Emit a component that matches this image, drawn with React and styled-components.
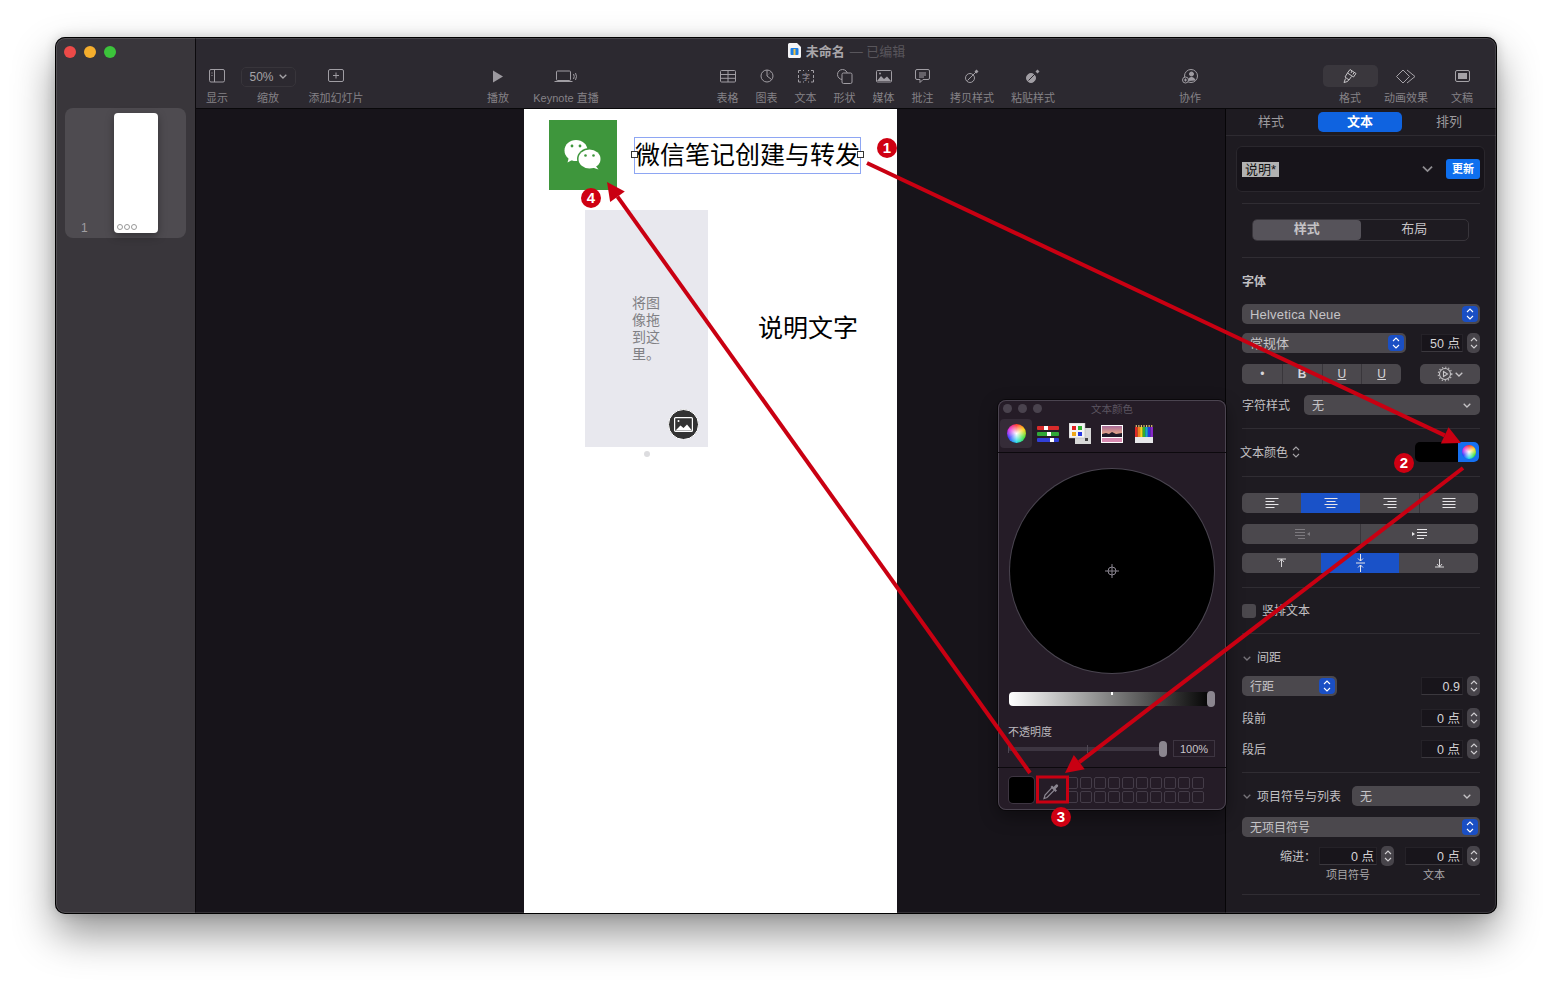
import React from "react";
import styled, { createGlobalStyle } from "styled-components";

const FONT = `"Liberation Sans", "Noto Sans CJK SC", sans-serif`;
const ICON = "#a09da3";
const RED = "#c90012";

const GlobalStyle = createGlobalStyle`
  html, body {
    margin: 0;
    background: #fff;
  }
  * {
    box-sizing: border-box;
  }
`;

const Page = styled.div`
  position: relative;
  width: 1552px;
  height: 987px;
  padding: 37px 0 0 55px;
  overflow: hidden;
  font-family: ${FONT};
  background: #fff;
`;

const Window = styled.div`
  position: relative;
  display: flex;
  width: 1442px;
  height: 877px;
  border-radius: 10px;
  overflow: hidden;
  background: #2c2930;
`;

const WindowFrame = styled.div`
  position: absolute;
  inset: 0;
  border-radius: 10px;
  box-shadow: inset 0 0 0 1px #000, inset 0 0 0 2px rgba(255, 255, 255, 0.12);
  pointer-events: none;
`;

const WindowShadow = styled.div`
  position: absolute;
  left: 55px;
  top: 37px;
  width: 1442px;
  height: 877px;
  border-radius: 10px;
  box-shadow: 0 20px 42px rgba(0, 0, 0, 0.42), 0 0 12px rgba(0, 0, 0, 0.16);
`;

/* left thumbnails */
const Sidebar = styled.aside`
  flex: none;
  width: 141px;
  padding: 9px 9px 0 10px;
  background: #39363b;
  border-right: 1px solid #0c0a0d;
`;

const Lights = styled.div`
  display: flex;
  gap: 8px;
  margin-left: -1px;
`;

const Light = styled.span`
  width: 12px;
  height: 12px;
  border-radius: 50%;
  background: ${(p) => p.$color};
`;

const ThumbCard = styled.div`
  display: flex;
  justify-content: flex-start;
  width: 121px;
  height: 130px;
  margin-top: 50px;
  padding: 5px 0 0 49px;
  border-radius: 8px;
  background: #4e4b50;
`;

const ThumbNumber = styled.span`
  align-self: flex-end;
  margin: 0 0 3px -33px;
  width: 33px;
  color: #a09ea2;
  font-size: 12px;
`;

const ThumbSlide = styled.div`
  display: flex;
  align-items: flex-end;
  gap: 1px;
  width: 44px;
  height: 120px;
  padding: 0 0 3px 3px;
  border-radius: 4px;
  background: #fff;
  box-shadow: 0 3px 8px rgba(0, 0, 0, 0.35);
`;

const ThumbDot = styled.span`
  width: 6px;
  height: 6px;
  border: 1px solid #999;
  border-radius: 50%;
`;

/* main column */
const Main = styled.div`
  flex: 1;
  min-width: 0;
  display: flex;
  flex-direction: column;
`;

const Toolbar = styled.header`
  flex: none;
  height: 72px;
  background: #2c2930;
  border-bottom: 1px solid #09080a;
`;

const TitleRow = styled.div`
  display: flex;
  align-items: center;
  justify-content: center;
  gap: 5px;
  height: 28px;
  padding-bottom: 2px;
  font-size: 13px;
`;

const TitleName = styled.span`
  color: #a9a6aa;
  font-weight: 700;
`;

const TitleState = styled.span`
  color: #59565c;
`;

const ToolRow = styled.div`
  display: flex;
`;

const ToolItem = styled.div`
  flex: none;
  display: flex;
  flex-direction: column;
  align-items: center;
  width: ${(p) => p.$w}px;
  margin-left: ${(p) => p.$ml || 0}px;
`;

const ToolIcon = styled.div`
  display: flex;
  align-items: center;
  justify-content: center;
  width: ${(p) => (p.$active ? "55px" : "100%")};
  height: 22px;
  border-radius: 5px;
  background: ${(p) => (p.$active ? "#3a373d" : "transparent")};
`;

const ZoomBox = styled.div`
  display: flex;
  align-items: center;
  justify-content: center;
  gap: 5px;
  width: 55px;
  height: 20px;
  margin-top: 1px;
  border: 1px solid #38353b;
  border-radius: 5px;
  color: #a5a3a7;
  font-size: 12px;
`;

const ToolLabel = styled.span`
  margin-top: 3px;
  padding-top: 1px;
  color: #858287;
  font-size: 11px;
  line-height: 15px;
  white-space: nowrap;
`;

const Workspace = styled.div`
  flex: 1;
  min-height: 0;
  display: flex;
`;

const Canvas = styled.main`
  flex: 1;
  display: flex;
  justify-content: center;
  background: #17141a;
  border-right: 1px solid #060507;
`;

const Slide = styled.section`
  position: relative;
  width: 373px;
  background: #fff;
`;

const WechatTile = styled.div`
  position: absolute;
  left: 25px;
  top: 11px;
  display: flex;
  align-items: center;
  justify-content: center;
  width: 68px;
  height: 70px;
  background: #3e963c;
`;

const TitleBox = styled.div`
  position: absolute;
  left: 110px;
  top: 28px;
  width: 227px;
  height: 37px;
  border: 1px solid #8ea6f3;
  color: #000;
  font-size: 25px;
  line-height: 35px;
  text-align: center;
  white-space: nowrap;
`;

const Handle = styled.span`
  position: absolute;
  top: 13px;
  ${(p) => p.$side}: -4px;
  width: 7px;
  height: 7px;
  border: 1px solid #333;
  background: #fff;
`;

const Placeholder = styled.div`
  position: absolute;
  left: 61px;
  top: 101px;
  display: flex;
  align-items: center;
  justify-content: center;
  width: 123px;
  height: 237px;
  background: #e8e8ee;
`;

const PlaceholderText = styled.p`
  width: 30px;
  margin: 0 1px 0 0;
  color: #808084;
  font-size: 14px;
  line-height: 17px;
  text-align: center;
`;

const MediaBadge = styled.div`
  position: absolute;
  right: 9px;
  bottom: 7px;
  display: flex;
  align-items: center;
  justify-content: center;
  width: 31px;
  height: 31px;
  border: 1px solid #fff;
  border-radius: 50%;
  background: #333;
`;

const SlideDot = styled.span`
  position: absolute;
  left: 120px;
  top: 342px;
  width: 6px;
  height: 6px;
  border-radius: 50%;
  background: #dcdcdf;
`;

const Caption = styled.div`
  position: absolute;
  left: 234px;
  top: 202px;
  color: #000;
  font-size: 25px;
  line-height: 34px;
  white-space: nowrap;
`;

/* right inspector */
const Inspector = styled.aside`
  flex: none;
  width: 271px;
  display: flex;
  flex-direction: column;
  background: #1e1b21;
  color: #b5b3b6;
  font-size: 12px;
`;

const Tabs = styled.div`
  flex: none;
  display: flex;
  justify-content: center;
  gap: 5px;
  height: 27px;
  padding: 3px 3px 0 0;
  border-bottom: 1px solid #2e2b31;
`;

const Tab = styled.div`
  width: 84px;
  height: 20px;
  border-radius: 5px;
  background: ${(p) => (p.$active ? "#0f63e0" : "transparent")};
  color: ${(p) => (p.$active ? "#fff" : "#9c9a9e")};
  font-size: 13px;
  font-weight: ${(p) => (p.$active ? 700 : 400)};
  line-height: 20px;
  text-align: center;
`;

const Pane = styled.div`
  padding: 0 17px 0 16px;
`;

const StyleCard = styled.div`
  display: flex;
  align-items: center;
  width: 249px;
  height: 46px;
  margin: 10px 0 0 -6px;
  padding: 0 4px 0 5px;
  border: 1px solid #2a272d;
  border-radius: 6px;
  background: #17141a;
`;

const StyleName = styled.span`
  padding: 0 3px;
  background: #b2b2b2;
  color: #111;
  font-size: 13px;
  line-height: 15px;
`;

const StyleGap = styled.span`
  flex: 1;
`;

const UpdateButton = styled.span`
  width: 34px;
  height: 20px;
  margin-left: 13px;
  border-radius: 3px;
  background: #0e6fee;
  color: #fff;
  font-size: 11px;
  font-weight: 700;
  line-height: 20px;
  text-align: center;
`;

const Divider = styled.hr`
  height: 1px;
  margin: ${(p) => p.$mt}px 0 0;
  border: 0;
  background: #302d33;
`;

const Segment = styled.div`
  display: flex;
  width: 217px;
  height: 22px;
  margin: 15px 0 0 10px;
  border: 1px solid #38353b;
  border-radius: 5px;
`;

const SegmentItem = styled.div`
  flex: 1;
  border-radius: 4px;
  background: ${(p) => (p.$active ? "#56535a" : "transparent")};
  color: #c4c2c5;
  font-size: 13px;
  font-weight: ${(p) => (p.$active ? 700 : 400)};
  line-height: 18px;
  text-align: center;
`;

const Row = styled.div`
  display: flex;
  align-items: center;
  justify-content: ${(p) => p.$justify || "flex-start"};
  height: ${(p) => p.$h || 20}px;
  margin-top: ${(p) => p.$mt}px;
`;

const Heading = styled.span`
  margin-left: ${(p) => p.$ml || 0}px;
  padding-bottom: ${(p) => p.$pb ?? 2}px;
  color: #c2c0c3;
  font-weight: ${(p) => (p.$bold ? 700 : 400)};
  white-space: nowrap;
`;

const Select = styled.div`
  flex: none;
  display: flex;
  align-items: center;
  justify-content: space-between;
  width: ${(p) => p.$w}px;
  height: 20px;
  margin-left: ${(p) => p.$ml || 0}px;
  padding: 0 2px 0 8px;
  border-radius: 5px;
  background: #4b484d;
  color: #c6c4c7;
  font-size: ${(p) => p.$fs || 12}px;
  white-space: nowrap;
`;

const SelectText = styled.span`
  padding: ${(p) => (p.$latin ? "1px 0 0" : "0 0 2px")};
  letter-spacing: ${(p) => (p.$latin ? "0.2px" : "0")};
`;

const BlueUpDown = styled.span`
  display: flex;
  align-items: center;
  justify-content: center;
  width: 16px;
  height: 16px;
  border-radius: 4px;
  background: #1a4fc4;
`;

const DownWrap = styled.span`
  display: flex;
  padding-right: 7px;
`;

const NumField = styled.div`
  flex: none;
  width: ${(p) => p.$w || 42}px;
  height: 18px;
  margin-left: ${(p) => p.$ml || 0}px;
  padding-right: 2px;
  border: 1px solid #252228;
  border-bottom-color: #3b383e;
  background: #18151b;
  color: #d5d3d6;
  font-size: 12.5px;
  line-height: 18px;
  text-align: right;
  white-space: nowrap;
`;

const StepperBox = styled.div`
  flex: none;
  display: flex;
  align-items: center;
  justify-content: center;
  width: 13px;
  height: 20px;
  margin-left: 4px;
  border-radius: 5px;
  background: #47444a;
`;

const Group = styled.div`
  flex: none;
  display: flex;
  width: ${(p) => p.$w || 236}px;
  height: 20px;
  border-radius: 5px;
  overflow: hidden;
  background: #4b484d;
`;

const GroupCell = styled.div`
  flex: ${(p) => p.$flex || 1};
  display: flex;
  align-items: center;
  justify-content: center;
  color: #d8d6d9;
  font-size: 12px;
  font-weight: ${(p) => (p.$bold ? 700 : 400)};
  text-decoration: ${(p) => (p.$underline ? "underline" : "none")};
  background: ${(p) => (p.$active ? "#1a52c8" : "transparent")};
  border-left: 1px solid ${(p) => (p.$line ? "#39363b" : "transparent")};
`;

const GearButton = styled.div`
  flex: none;
  display: flex;
  align-items: center;
  justify-content: center;
  gap: 2px;
  width: 60px;
  height: 20px;
  margin-left: 19px;
  border-radius: 5px;
  background: #4b484d;
`;

const ColorLabel = styled.span`
  display: flex;
  align-items: center;
  gap: 4px;
  margin-left: -2px;
  padding-bottom: 1px;
  color: #c2c0c3;
`;

const ColorWell = styled.div`
  flex: none;
  display: flex;
  align-items: center;
  width: 64px;
  height: 20px;
  margin-left: auto;
  margin-right: 1px;
  border-radius: 5px;
  overflow: hidden;
  background: #000;
`;

const ColorButton = styled.span`
  display: flex;
  align-items: center;
  justify-content: center;
  width: 21px;
  height: 20px;
  margin-left: auto;
  background: #1670f0;
`;

const Wheel = styled.span`
  display: block;
  width: ${(p) => p.$size}px;
  height: ${(p) => p.$size}px;
  border-radius: 50%;
  background: radial-gradient(circle, #fff 0%, rgba(255, 255, 255, 0) 72%),
    conic-gradient(#ff2a20, #ffd000, #32e02c, #18d8e8, #2830ff, #e020e0, #ff2a20);
`;

const CheckBox = styled.span`
  width: 14px;
  height: 14px;
  border-radius: 3px;
  background: #4b484d;
`;

const CollapseRow = styled(Row)`
  gap: 6px;
  padding-left: 1px;
`;

const IndentLabel = styled.span`
  width: 74px;
  margin-right: 3px;
  padding-bottom: 2px;
  color: #c2c0c3;
  text-align: right;
  white-space: nowrap;
`;

const SubLabels = styled.div`
  display: flex;
  height: 14px;
  margin-top: 2px;
  color: #a9a7aa;
  font-size: 11px;
  line-height: 14px;
`;

const SubLabel = styled.span`
  width: ${(p) => p.$w}px;
  margin-left: ${(p) => p.$ml}px;
  text-align: center;
`;

/* floating colour picker */
const ColorPanel = styled.div`
  position: absolute;
  left: 943px;
  top: 363px;
  width: 228px;
  height: 410px;
  display: flex;
  flex-direction: column;
  border-radius: 8px;
  background: #251c27;
  box-shadow: inset 0 0 0 1px #4b4450, 0 0 0 1px #0a080b, 0 6px 18px rgba(0, 0, 0, 0.4);
  overflow: hidden;
`;

const PanelTitle = styled.div`
  position: relative;
  flex: none;
  height: 19px;
  color: #5c5560;
  font-size: 10.5px;
  line-height: 18px;
  text-align: center;
`;

const PanelDots = styled.div`
  position: absolute;
  left: 5px;
  top: 4px;
  display: flex;
  gap: 6px;
`;

const PanelDot = styled.span`
  width: 9px;
  height: 9px;
  border-radius: 50%;
  background: #4a434e;
`;

const PickerTabs = styled.div`
  flex: none;
  display: flex;
  align-items: center;
  height: 34px;
  padding: 0 0 4px 2px;
  border-bottom: 1px solid #0c090d;
`;

const PickerTab = styled.div`
  flex: none;
  display: flex;
  align-items: center;
  justify-content: center;
  width: 32px;
  height: 29px;
  border-radius: 4px;
  background: ${(p) => (p.$active ? "#352c38" : "transparent")};
`;

const BigWheel = styled.div`
  flex: none;
  display: flex;
  align-items: center;
  justify-content: center;
  align-self: center;
  width: 204px;
  height: 204px;
  margin-top: 16px;
  border-radius: 50%;
  background: #000;
  box-shadow: 0 0 0 1px #4a4550;
`;

const Brightness = styled.div`
  position: relative;
  flex: none;
  width: 204px;
  height: 14px;
  margin: 19px 0 0 11px;
  border-radius: 4px;
  background: linear-gradient(90deg, #fff, #808080 50%, #000);
`;

const BrightTick = styled.span`
  position: absolute;
  left: 102px;
  top: 0;
  width: 2px;
  height: 3px;
  background: #fff;
`;

const SliderKnob = styled.span`
  position: absolute;
  right: ${(p) => p.$right}px;
  top: ${(p) => p.$top}px;
  width: 8px;
  height: 16px;
  border-radius: 4px;
  background: #8b868f;
`;

const OpacityLabel = styled.div`
  flex: none;
  margin: 19px 0 0 10px;
  color: #bab7bc;
  font-size: 11px;
  line-height: 15px;
`;

const OpacityRow = styled.div`
  flex: none;
  display: flex;
  align-items: center;
  height: 17px;
  margin-left: 10px;
`;

const OpacityTrack = styled.div`
  position: relative;
  width: 158px;
  height: 4px;
  border-radius: 2px;
  background: #3d3541;
`;

const OpacityTick = styled.span`
  position: absolute;
  left: ${(p) => p.$left}px;
  top: -2px;
  width: 1px;
  height: 8px;
  background: #4e4652;
`;

const OpacityValue = styled.div`
  width: 42px;
  height: 17px;
  margin-left: 7px;
  border: 1px solid #3d3541;
  color: #c8c5ca;
  font-size: 11px;
  line-height: 16px;
  text-align: center;
`;

const SwatchRow = styled.div`
  flex: 1;
  display: flex;
  margin-top: 10px;
  padding: 9px 0 0 11px;
  border-top: 1px solid #0c090d;
`;

const BlackSwatch = styled.span`
  width: 25px;
  height: 26px;
  border-radius: 4px;
  background: #000;
  box-shadow: 0 0 0 1px #3d3541;
`;

const Dropper = styled.span`
  display: flex;
  align-items: center;
  justify-content: center;
  width: 30px;
  height: 27px;
  margin-left: 2px;
`;

const SwatchGrid = styled.div`
  display: grid;
  grid-template-columns: repeat(10, 12px);
  grid-auto-rows: 12px;
  gap: 2px;
`;

const SwatchCell = styled.span`
  border: 1px solid #443c48;
  border-radius: 2px;
`;

/* annotations drawn over the screenshot */
const Overlay = styled.svg`
  position: absolute;
  left: 0;
  top: 0;
  width: 1552px;
  height: 987px;
  pointer-events: none;
`;

const Badge = styled.span`
  position: absolute;
  left: ${(p) => p.$x - 10}px;
  top: ${(p) => p.$y - 10}px;
  width: 20px;
  height: 20px;
  border-radius: 50%;
  background: #cf0012;
  color: #fff;
  font-size: 15px;
  font-weight: 700;
  line-height: 20px;
  text-align: center;
`;

const Svg = ({ w = 20, h = 16, children, color = ICON, sw = 1 }) => (
  <svg width={w} height={h} viewBox={`0 0 ${w} ${h}`} fill="none" stroke={color} strokeWidth={sw}>
    {children}
  </svg>
);

const IconShow = () => (
  <Svg w={16} h={14}>
    <rect x=".5" y=".5" width="15" height="12.5" rx="1.5" />
    <path d="M5.5.5v12.5M2.5 4h1M2.5 6.500h1" />
  </Svg>
);
const IconAdd = () => (
  <Svg w={16} h={14}>
    <rect x=".5" y=".5" width="15" height="12" rx="1.5" />
    <path d="M8 3.500v6M5 6.500h6" />
  </Svg>
);
const IconPlay = () => (
  <svg width="12" height="13" viewBox="0 0 12 13">
    <path d="M1 .5l10 6-10 6z" fill="#9c999f" />
  </svg>
);
const IconLive = () => (
  <Svg w={24} h={13}>
    <rect x="2.5" y="1" width="14" height="9.5" rx="1" />
    <path d="M.5 11.500h18M19.500 4q1.500 2.500 0 5M21.500 3q2 3.500 0 7" />
  </Svg>
);
const IconTable = () => (
  <Svg w={16} h={13}>
    <rect x=".5" y=".5" width="15" height="11.500" rx="1" />
    <path d="M.5 4.500h15M.5 8.300h15M8 .5v11.500" />
  </Svg>
);
const IconChart = () => (
  <Svg w={14} h={14}>
    <circle cx="7" cy="7" r="6" />
    <path d="M7 7V1M7 7l4.500 3.500" />
    <path d="M7 7l4-4.500" opacity=".3" />
  </Svg>
);
const IconText = () => (
  <Svg w={16} h={13}>
    <path d="M3 .5H.5V3M13 .5h2.500V3M3 12H.5V9.500M13 12h2.500V9.500M5 .5h1M10 .5h1M5 12h1M10 12h1M.5 5v3M15.500 5v3" />
    <text x="8" y="9.500" fontSize="8" fill={ICON} stroke="none" textAnchor="middle" fontFamily={FONT}>
      字
    </text>
  </Svg>
);
const IconShape = () => (
  <Svg w={16} h={15}>
    <circle cx="5.500" cy="5.500" r="5" />
    <rect x="5" y="4" width="10" height="10.500" rx="1.500" fill="#2c2930" />
  </Svg>
);
const IconMedia = () => (
  <Svg w={16} h={13}>
    <rect x=".5" y=".5" width="15" height="11.500" rx="1" />
    <path d="M1 11l4-5 3 3 3-2.500 4 4.500z" fill={ICON} stroke="none" />
    <circle cx="4" cy="3.500" r="1" fill={ICON} stroke="none" />
  </Svg>
);
const IconComment = () => (
  <Svg w={15} h={15}>
    <path d="M2 .5h11a1.500 1.500 0 0 1 1.500 1.500v7a1.500 1.500 0 0 1-1.500 1.500H8l-3 3v-3H2A1.500 1.500 0 0 1 .5 9V2A1.500 1.500 0 0 1 2 .5z" />
    <path d="M4 4h7M4 6h7M4 8h5" />
  </Svg>
);
const IconCopyStyle = ({ filled }) => (
  <Svg w={14} h={14}>
    <circle cx="5" cy="9" r="4.500" fill={filled ? ICON : "none"} />
    <path d="M2.500 11.500L11 3" stroke={filled ? "#2c2930" : ICON} />
    <path d="M9.500 2.500l2-2 2 2-2 2z" fill={ICON} stroke="none" />
  </Svg>
);
const IconCollab = () => (
  <Svg w={16} h={15}>
    <circle cx="9" cy="7" r="6.500" />
    <circle cx="9.500" cy="5" r="2" fill={ICON} />
    <path d="M5.500 12q1-4 4-4t4 3.500z" fill={ICON} stroke="none" />
    <circle cx="3.500" cy="11" r="3" fill="#2c2930" />
    <path d="M3.500 9.500v3M2 11h3" />
  </Svg>
);
const IconFormat = () => (
  <Svg w={15} h={16} color="#c7c5c8">
    <path d="M7 1.500l6 4-2.500 3.500-6-4z" />
    <path d="M4.500 5L2 9l4 3 2.500-3.500M2.500 10.500L1 14.500l3.500-1 1.500-2" />
    <path d="M9 3l-1 2M11 4.500l-1 2" />
  </Svg>
);
const IconAnimate = () => (
  <Svg w={20} h={15} color="#a5a2a7">
    <path d="M7 1l6.500 6.500L7 14 .5 7.500zM11 1l8 6.500-8 6.500" />
  </Svg>
);
const IconDoc = () => (
  <Svg w={15} h={12} color="#a5a2a7">
    <rect x=".5" y=".5" width="14" height="11" rx="1.500" />
    <rect x="3" y="3" width="9" height="6" fill="#a5a2a7" stroke="none" />
  </Svg>
);

const FileIcon = () => (
  <svg width="13" height="15" viewBox="0 0 13 15">
    <path d="M1.500 0H9l4 4v9.500a1.500 1.500 0 0 1-1.500 1.500h-10A1.500 1.500 0 0 1 0 13.500v-12A1.500 1.500 0 0 1 1.500 0z" fill="#f4f4f6" />
    <rect x="2.500" y="5" width="8" height="7" rx="1" fill="#1c7fe6" />
    <rect x="5.500" y="6" width="2" height="6" fill="#f3c244" />
  </svg>
);

const ChevronDown = ({ color = "#c4c2c5", size = 8 }) => (
  <svg width={size} height={size - 3} viewBox="0 0 8 5" fill="none" stroke={color} strokeWidth="1.300">
    <path d="M.7.700L4 4l3.300-3.300" />
  </svg>
);

const UpDown = ({ color = "#fff" }) => (
  <svg width="8" height="14" viewBox="0 0 8 14" fill="none" stroke={color} strokeWidth="1.100">
    <path d="M1 5l3-3 3 3M1 9l3 3 3-3" />
  </svg>
);

const Stepper = () => (
  <StepperBox>
    <UpDown color="#d0ced1" />
  </StepperBox>
);

const WechatLogo = () => (
  <svg width="38" height="32" viewBox="0 0 38 32">
    <ellipse cx="12" cy="11.500" rx="11.500" ry="10.500" fill="#fff" />
    <path d="M5 18l-1.500 5.500L10 20z" fill="#fff" />
    <ellipse cx="25.500" cy="20" rx="12.500" ry="11" fill="#3e963c" />
    <ellipse cx="25.500" cy="20" rx="11" ry="9.500" fill="#fff" />
    <path d="M31 26l3.500 4.500-6-2z" fill="#fff" />
    <circle cx="8" cy="7" r="1.400" fill="#3e963c" />
    <circle cx="16" cy="7" r="1.400" fill="#3e963c" />
    <circle cx="21.500" cy="16.500" r="1.300" fill="#3e963c" />
    <circle cx="29.500" cy="16.500" r="1.300" fill="#3e963c" />
  </svg>
);

const MediaIcon = () => (
  <svg width="19" height="15" viewBox="0 0 19 15" fill="none" stroke="#fff" strokeWidth="1.200">
    <rect x=".6" y=".6" width="17.800" height="13.800" rx="1" />
    <path d="M1.500 13.500l5-5 3 2.500 3.500-3.500 5 6z" fill="#fff" stroke="none" />
    <circle cx="4.500" cy="4" r="1" fill="#fff" stroke="none" />
  </svg>
);

const AlignLines = ({ side, color = "#e8e6e9" }) => {
  const widths = [13, 9, 13, 9];
  return (
    <svg width="14" height="12" viewBox="0 0 14 12" stroke={color} strokeWidth="1">
      {widths.map((w, i) => {
        const width = side === "justify" ? 13 : w;
        const x = side === "left" ? 0.5 : side === "right" ? 13.5 - width : (14 - width) / 2;
        return <line key={i} x1={x} x2={x + width} y1={1.5 + i * 3} y2={1.5 + i * 3} />;
      })}
    </svg>
  );
};

const IndentIcon = ({ flip, color }) => (
  <svg width="16" height="12" viewBox="0 0 16 12" stroke={color} strokeWidth="1" style={flip ? { transform: "scaleX(-1)" } : undefined}>
    <path d="M5 1.500h10M5 4.500h10M5 7.500h10M5 10.500h7" />
    <path d="M0 4l3 2-3 2z" fill={color} stroke="none" />
  </svg>
);

const ValignIcon = ({ kind, color }) => (
  <svg width="11" height="20" viewBox="0 0 11 20" fill="none" stroke={color} strokeWidth="1">
    {kind === "top" && <path d="M1 6h9M5.500 6v8M3 9l2.500-3L8 9" />}
    {kind === "mid" && <path d="M1 10h9M5.500 1v7M5.500 12v7M3 5.500l2.500 2.500L8 5.500M3 14.500L5.500 12 8 14.500" />}
    {kind === "bottom" && <path d="M1 14h9M5.500 6v8M3 11l2.500 3L8 11" />}
  </svg>
);

const GearIcon = () => (
  <svg width="16" height="16" viewBox="0 0 16 16" fill="none" stroke="#c8c6c9" strokeWidth="1.100">
    <circle cx="8" cy="8" r="5.500" />
    <circle cx="8" cy="8" r="6.800" strokeDasharray="1.200 2" />
    <path d="M6.500 5.500L10.500 8l-4 2.500z" />
  </svg>
);

const SlidersIcon = () => (
  <svg width="22" height="16" viewBox="0 0 22 16">
    <rect x="0" y="0" width="22" height="4" rx="1" fill="#d92b2b" />
    <rect x="0" y="6" width="22" height="4" rx="1" fill="#30a838" />
    <rect x="0" y="12" width="22" height="4" rx="1" fill="#3240d8" />
    <rect x="7" y="0" width="4" height="4" fill="#fff" />
    <rect x="10" y="6" width="4" height="4" fill="#fff" />
    <rect x="13" y="12" width="4" height="4" fill="#fff" />
  </svg>
);

const PaletteIcon = () => (
  <svg width="22" height="21" viewBox="0 0 22 21">
    <rect x="6" y="5" width="16" height="16" fill="#d8d8d8" />
    <rect x="16" y="15" width="3" height="3" fill="#444" />
    <rect x="0" y="0" width="16" height="15" fill="#f4f4f4" stroke="#aaa" strokeWidth=".5" />
    <rect x="3" y="3" width="4" height="4" fill="#e02020" />
    <rect x="9" y="3" width="4" height="4" fill="#30b030" />
    <rect x="3" y="9" width="4" height="4" fill="#f0a818" />
    <rect x="9" y="9" width="4" height="4" fill="#2838e0" />
  </svg>
);

const LandscapeIcon = () => (
  <svg width="22" height="18" viewBox="0 0 22 18">
    <defs>
      <linearGradient id="sky" x1="0" y1="0" x2="0" y2="1">
        <stop offset="0" stopColor="#a86a98" />
        <stop offset="1" stopColor="#f0b088" />
      </linearGradient>
    </defs>
    <rect width="22" height="18" fill="#fff" />
    <rect x="1" y="1" width="20" height="9" fill="url(#sky)" />
    <path d="M1 9l4-1 3 1 3-2 4 2 6-1v4H1z" fill="#201a28" />
    <rect x="1" y="13" width="20" height="4" fill="#d88ab0" />
  </svg>
);

const PencilsIcon = () => {
  const colors = ["#e02828", "#f08020", "#f0d820", "#30b030", "#18a8c8", "#2838e0", "#8828c8"];
  return (
    <svg width="18" height="18" viewBox="0 0 18 18">
      {colors.map((c, i) => (
        <g key={c}>
          <rect x={i * 2.57} y="2" width="2.570" height="10" fill={c} />
          <rect x={i * 2.57 + 0.7} y="0" width="1.200" height="2" fill="#e0c070" />
        </g>
      ))}
      <rect y="12" width="18" height="6" fill="#e8e8ea" />
    </svg>
  );
};

const Crosshair = () => (
  <svg width="14" height="14" viewBox="0 0 14 14" fill="none" stroke="#8a8590" strokeWidth="1">
    <circle cx="7" cy="7" r="4" />
    <path d="M7 0v14M0 7h14" />
  </svg>
);

const DropperIcon = () => (
  <svg width="18" height="18" viewBox="0 0 18 18">
    <path d="M10.500 5L13 7.500 5 15.500 2 16.500 3 13z" fill="none" stroke="#8a8590" strokeWidth="1.200" />
    <path d="M10 3.500l1.500 1.500 2.500-2.500a1.500 1.500 0 0 1 2 2L13.500 7l1.500 1.500L13.500 10 8.500 5z" fill="#8a8590" />
  </svg>
);

const Arrow = ({ from, to }) => {
  const [x1, y1] = from;
  const [x2, y2] = to;
  const len = Math.hypot(x2 - x1, y2 - y1);
  const ux = (x2 - x1) / len;
  const uy = (y2 - y1) / len;
  const bx = x2 - ux * 18;
  const by = y2 - uy * 18;
  const head = `${x2},${y2} ${bx - uy * 9},${by + ux * 9} ${bx + uy * 9},${by - ux * 9}`;
  return (
    <g>
      <line x1={x1} y1={y1} x2={bx} y2={by} stroke={RED} strokeWidth="4" />
      <polygon points={head} fill={RED} />
    </g>
  );
};

const TOOLS = [
  { label: "显示", w: 30, ml: 6, icon: <IconShow /> },
  { label: "缩放", w: 56, ml: 8, zoom: true },
  { label: "添加幻灯片", w: 64, ml: 8, icon: <IconAdd /> },
  { label: "播放", w: 40, ml: 110, icon: <IconPlay /> },
  { label: "Keynote 直播", w: 76, ml: 10, icon: <IconLive /> },
  { label: "表格", w: 39, ml: 104, icon: <IconTable /> },
  { label: "图表", w: 39, icon: <IconChart /> },
  { label: "文本", w: 39, icon: <IconText /> },
  { label: "形状", w: 39, icon: <IconShape /> },
  { label: "媒体", w: 39, icon: <IconMedia /> },
  { label: "批注", w: 39, icon: <IconComment /> },
  { label: "拷贝样式", w: 60, icon: <IconCopyStyle /> },
  { label: "粘贴样式", w: 60, ml: 1, icon: <IconCopyStyle filled /> },
  { label: "协作", w: 40, ml: 107, icon: <IconCollab /> },
  { label: "格式", w: 56, ml: 112, icon: <IconFormat />, active: true },
  { label: "动画效果", w: 56, icon: <IconAnimate /> },
  { label: "文稿", w: 56, icon: <IconDoc /> },
];

const Number2 = ({ value, ml }) => (
  <>
    <NumField $ml={ml}>{value}</NumField>
    <Stepper />
  </>
);

const Picker = () => (
  <ColorPanel>
    <PanelTitle>
      <PanelDots>
        <PanelDot />
        <PanelDot />
        <PanelDot />
      </PanelDots>
      文本颜色
    </PanelTitle>
    <PickerTabs>
      <PickerTab $active>
        <Wheel $size={19} />
      </PickerTab>
      <PickerTab>
        <SlidersIcon />
      </PickerTab>
      <PickerTab>
        <PaletteIcon />
      </PickerTab>
      <PickerTab>
        <LandscapeIcon />
      </PickerTab>
      <PickerTab>
        <PencilsIcon />
      </PickerTab>
    </PickerTabs>
    <BigWheel>
      <Crosshair />
    </BigWheel>
    <Brightness>
      <BrightTick />
      <SliderKnob $right={-2} $top={-1} />
    </Brightness>
    <OpacityLabel>不透明度</OpacityLabel>
    <OpacityRow>
      <OpacityTrack>
        <OpacityTick $left={0} />
        <OpacityTick $left={79} />
        <SliderKnob $right={-1} $top={-6} />
      </OpacityTrack>
      <OpacityValue>100%</OpacityValue>
    </OpacityRow>
    <SwatchRow>
      <BlackSwatch />
      <Dropper>
        <DropperIcon />
      </Dropper>
      <SwatchGrid>
        {Array.from({ length: 20 }, (_, i) => (
          <SwatchCell key={i} />
        ))}
      </SwatchGrid>
    </SwatchRow>
  </ColorPanel>
);

const App = () => (
  <Page>
    <GlobalStyle />
    <WindowShadow />
    <Window>
      <Sidebar>
        <Lights>
          <Light $color="#ec4a48" />
          <Light $color="#f5ae2d" />
          <Light $color="#3cc43b" />
        </Lights>
        <ThumbCard>
          <ThumbNumber>1</ThumbNumber>
          <ThumbSlide>
            <ThumbDot />
            <ThumbDot />
            <ThumbDot />
          </ThumbSlide>
        </ThumbCard>
      </Sidebar>
      <Main>
        <Toolbar>
          <TitleRow>
            <FileIcon />
            <TitleName>未命名</TitleName>
            <TitleState>— 已编辑</TitleState>
          </TitleRow>
          <ToolRow>
            {TOOLS.map((tool) => (
              <ToolItem key={tool.label} $w={tool.w} $ml={tool.ml}>
                <ToolIcon $active={tool.active}>
                  {tool.zoom ? (
                    <ZoomBox>
                      50%
                      <ChevronDown color="#a5a3a7" />
                    </ZoomBox>
                  ) : (
                    tool.icon
                  )}
                </ToolIcon>
                <ToolLabel>{tool.label}</ToolLabel>
              </ToolItem>
            ))}
          </ToolRow>
        </Toolbar>
        <Workspace>
          <Canvas>
            <Slide>
              <WechatTile>
                <WechatLogo />
              </WechatTile>
              <TitleBox>
                <Handle $side="left" />
                微信笔记创建与转发
                <Handle $side="right" />
              </TitleBox>
              <Placeholder>
                <PlaceholderText>将图像拖到这里。</PlaceholderText>
                <MediaBadge>
                  <MediaIcon />
                </MediaBadge>
              </Placeholder>
              <SlideDot />
              <Caption>说明文字</Caption>
            </Slide>
          </Canvas>
          <Inspector>
            <Tabs>
              <Tab>样式</Tab>
              <Tab $active>文本</Tab>
              <Tab>排列</Tab>
            </Tabs>
            <Pane>
              <StyleCard>
                <StyleName>说明*</StyleName>
                <StyleGap />
                <ChevronDown color="#8e8c90" size={11} />
                <UpdateButton>更新</UpdateButton>
              </StyleCard>
              <Divider $mt={11} />
              <Segment>
                <SegmentItem $active>样式</SegmentItem>
                <SegmentItem>布局</SegmentItem>
              </Segment>
              <Divider $mt={16} />
              <Row $mt={15} $h={16}>
                <Heading $bold>字体</Heading>
              </Row>
              <Row $mt={15}>
                <Select $w={238} $fs={13}>
                  <SelectText $latin>Helvetica Neue</SelectText>
                  <BlueUpDown>
                    <UpDown />
                  </BlueUpDown>
                </Select>
              </Row>
              <Row $mt={9}>
                <Select $w={164} $fs={13}>
                  <SelectText>常规体</SelectText>
                  <BlueUpDown>
                    <UpDown />
                  </BlueUpDown>
                </Select>
                <Number2 value="50 点" ml={15} />
              </Row>
              <Row $mt={11}>
                <Group $w={159}>
                  <GroupCell>•</GroupCell>
                  <GroupCell $bold $line>B</GroupCell>
                  <GroupCell $underline $line>U</GroupCell>
                  <GroupCell $underline $line>U</GroupCell>
                </Group>
                <GearButton>
                  <GearIcon />
                  <ChevronDown size={8} />
                </GearButton>
              </Row>
              <Row $mt={11}>
                <Heading>字符样式</Heading>
                <Select $w={176} $ml={14}>
                  <SelectText>无</SelectText>
                  <DownWrap>
                    <ChevronDown />
                  </DownWrap>
                </Select>
              </Row>
              <Divider $mt={13} />
              <Row $mt={13}>
                <ColorLabel>
                  文本颜色
                  <UpDown color="#a5a3a7" />
                </ColorLabel>
                <ColorWell>
                  <ColorButton>
                    <Wheel $size={14} />
                  </ColorButton>
                </ColorWell>
              </Row>
              <Divider $mt={14} />
              <Row $mt={16}>
                <Group>
                  <GroupCell>
                    <AlignLines side="left" />
                  </GroupCell>
                  <GroupCell $active>
                    <AlignLines side="center" />
                  </GroupCell>
                  <GroupCell>
                    <AlignLines side="right" />
                  </GroupCell>
                  <GroupCell $line>
                    <AlignLines side="justify" />
                  </GroupCell>
                </Group>
              </Row>
              <Row $mt={11}>
                <Group>
                  <GroupCell>
                    <IndentIcon flip color="#7d7a7f" />
                  </GroupCell>
                  <GroupCell $line>
                    <IndentIcon color="#e8e6e9" />
                  </GroupCell>
                </Group>
              </Row>
              <Row $mt={9}>
                <Group>
                  <GroupCell>
                    <ValignIcon kind="top" color="#d8d6d9" />
                  </GroupCell>
                  <GroupCell $active>
                    <ValignIcon kind="mid" color="#e8e6e9" />
                  </GroupCell>
                  <GroupCell>
                    <ValignIcon kind="bottom" color="#d8d6d9" />
                  </GroupCell>
                </Group>
              </Row>
              <Divider $mt={14} />
              <Row $mt={16} $h={14}>
                <CheckBox />
                <Heading $ml={6} $pb={3}>竖排文本</Heading>
              </Row>
              <Divider $mt={15} />
              <CollapseRow $mt={16} $h={16}>
                <ChevronDown color="#77747a" />
                <Heading $pb={3}>间距</Heading>
              </CollapseRow>
              <Row $mt={10}>
                <Select $w={95}>
                  <SelectText>行距</SelectText>
                  <BlueUpDown>
                    <UpDown />
                  </BlueUpDown>
                </Select>
                <Number2 value="0.9" ml={84} />
              </Row>
              <Row $mt={12}>
                <Heading>段前</Heading>
                <Number2 value="0 点" ml={155} />
              </Row>
              <Row $mt={11}>
                <Heading>段后</Heading>
                <Number2 value="0 点" ml={155} />
              </Row>
              <Divider $mt={13} />
              <CollapseRow $mt={13}>
                <ChevronDown color="#77747a" />
                <Heading>项目符号与列表</Heading>
                <Select $w={128} $ml={5}>
                  <SelectText>无</SelectText>
                  <DownWrap>
                    <ChevronDown />
                  </DownWrap>
                </Select>
              </CollapseRow>
              <Row $mt={11}>
                <Select $w={238}>
                  <SelectText>无项目符号</SelectText>
                  <BlueUpDown>
                    <UpDown />
                  </BlueUpDown>
                </Select>
              </Row>
              <Row $mt={9}>
                <IndentLabel>缩进：</IndentLabel>
                <NumField $w={58}>0 点</NumField>
                <Stepper />
                <NumField $w={58} $ml={11}>0 点</NumField>
                <Stepper />
              </Row>
              <SubLabels>
                <SubLabel $w={58} $ml={77}>项目符号</SubLabel>
                <SubLabel $w={58} $ml={28}>文本</SubLabel>
              </SubLabels>
              <Divider $mt={12} />
            </Pane>
          </Inspector>
        </Workspace>
      </Main>
      <Picker />
      <WindowFrame />
    </Window>
    <Overlay viewBox="0 0 1552 987">
      <Arrow from={[867, 163]} to={[1461, 443]} />
      <Arrow from={[1463, 468]} to={[1065, 773]} />
      <Arrow from={[1030, 773]} to={[607, 182]} />
      <rect x="1037.500" y="777" width="30" height="25" fill="none" stroke={RED} strokeWidth="3" />
    </Overlay>
    <Badge $x={887} $y={148}>1</Badge>
    <Badge $x={1404} $y={463}>2</Badge>
    <Badge $x={1061} $y={817}>3</Badge>
    <Badge $x={591} $y={198}>4</Badge>
  </Page>
);

export default App;
